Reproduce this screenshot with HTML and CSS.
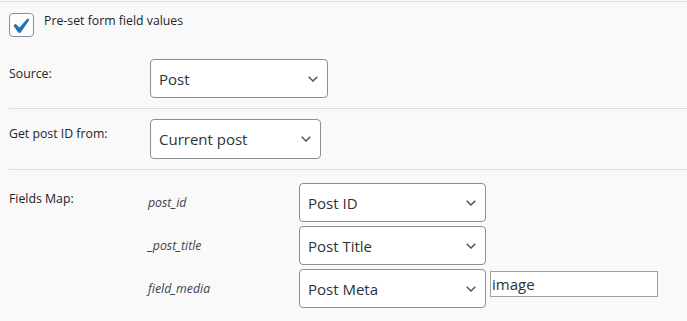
FILE: index.html
```html
<!DOCTYPE html>
<html lang="en">
<head>
    <meta charset="UTF-8">
    <title>Pre-set form field values</title>
    <link rel="stylesheet" href="styles.css">
</head>
<body>

<div class="preset-panel">
    <!-- toggle -->
    <div class="check-row">
        <div class="checkbox">
            <svg width="19" height="17" viewBox="5 4 12 11"><path d="M14.83 4.89l1.34.94-5.81 8.38H9.02L5.78 9.67l1.34-1.25 2.57 2.4z" fill="#2271b1"/></svg>
        </div>
        <div class="check-label">Pre-set form field values</div>
    </div>

    <!-- source -->
    <div class="field-row">
        <div class="field-label">Source:</div>
        <div class="select select-source">
            <span>Post</span>
            <svg class="chevron" width="10" height="6" viewBox="0 0 10 6"><path d="M0.7 0.7L5 5 9.3 0.7" fill="none" stroke="#50575e" stroke-width="1.5"/></svg>
        </div>
    </div>

    <div class="field-row">
        <div class="field-label">Get post ID from:</div>
        <div class="select select-id">
            <span>Current post</span>
            <svg class="chevron" width="10" height="6" viewBox="0 0 10 6"><path d="M0.7 0.7L5 5 9.3 0.7" fill="none" stroke="#50575e" stroke-width="1.5"/></svg>
        </div>
    </div>

    <!-- fields map -->
    <div class="field-row fields-row">
        <div class="field-label">Fields Map:</div>
        <div class="map-list">
            <div class="map-item">
                <div class="map-name">post_id</div>
                <div class="select select-map">
                    <span>Post ID</span>
                    <svg class="chevron" width="10" height="6" viewBox="0 0 10 6"><path d="M0.7 0.7L5 5 9.3 0.7" fill="none" stroke="#50575e" stroke-width="1.5"/></svg>
                </div>
            </div>
            <div class="map-item">
                <div class="map-name">_post_title</div>
                <div class="select select-map">
                    <span>Post Title</span>
                    <svg class="chevron" width="10" height="6" viewBox="0 0 10 6"><path d="M0.7 0.7L5 5 9.3 0.7" fill="none" stroke="#50575e" stroke-width="1.5"/></svg>
                </div>
            </div>
            <div class="map-item">
                <div class="map-name">field_media</div>
                <div class="select select-map">
                    <span>Post Meta</span>
                    <svg class="chevron" width="10" height="6" viewBox="0 0 10 6"><path d="M0.7 0.7L5 5 9.3 0.7" fill="none" stroke="#50575e" stroke-width="1.5"/></svg>
                </div>
                <div class="meta-input">image</div>
            </div>
        </div>
    </div>
</div>

</body>
</html>
```

FILE: styles.css
```css
:root {
    --text-color: #1d2327;
    --field-text: #2c3338;
    --border-color: #8c8f94;
    --line-color: #dcdcde;
    --bg: #f9f9f9;
}

body {
    margin: 0;
    font-family: 'Open Sans', 'Noto Sans', sans-serif;
    background-color: var(--bg);
    color: var(--text-color);
}

.preset-panel {
    margin-top: 1px;
    border-top: 1px solid var(--line-color);
}

/* 체크박스 */
.check-row {
    display: flex;
    align-items: flex-start;
    height: 37px;
    padding: 10px 0 0 9px;
}

.checkbox {
    width: 23px;
    height: 22px;
    margin-top: 1px;
    border: 1px solid var(--border-color);
    border-radius: 4px;
    background: #fff;
    display: flex;
    align-items: center;
    justify-content: center;
}

.check-label {
    margin-left: 10px;
    font-size: 12.3px;
    line-height: 18px;
}

/* 행 */
.field-row {
    display: flex;
    align-items: flex-start;
    margin-left: 9px;
    padding: 10px 0;
    border-bottom: 1px solid var(--line-color);
}

.field-label {
    width: 141px;
    padding-top: 5px;
    font-size: 12.3px;
    line-height: 20px;
}

.select {
    box-sizing: border-box;
    display: flex;
    align-items: center;
    justify-content: space-between;
    height: 39px;
    padding: 0 9px 0 8px;
    border: 1px solid var(--border-color);
    border-radius: 4px;
    background: #fff;
    color: var(--field-text);
    font-size: 15px;
}

.select-source {
    width: 178px;
}

.select-id {
    width: 171px;
    height: 40px;
}

.fields-row {
    padding-top: 13px;
    border-bottom: none;
}

.fields-row .field-label {
    padding-top: 6px;
}

.map-list {
    display: flex;
    flex-direction: column;
    gap: 4px;
    margin-left: -2px;
}

.map-item {
    display: flex;
    align-items: flex-start;
}

.map-name {
    width: 151px;
    font-size: 12.3px;
    line-height: 39px;
    font-style: italic;
    color: #3c434a;
}

.select-map {
    width: 187px;
}

.meta-input {
    box-sizing: border-box;
    width: 168px;
    height: 26px;
    margin: 2px 0 0 4px;
    padding-left: 1px;
    border: 1px solid #a0a0a0;
    background: #fff;
    color: var(--field-text);
    font-size: 15px;
    line-height: 24px;
}
```
